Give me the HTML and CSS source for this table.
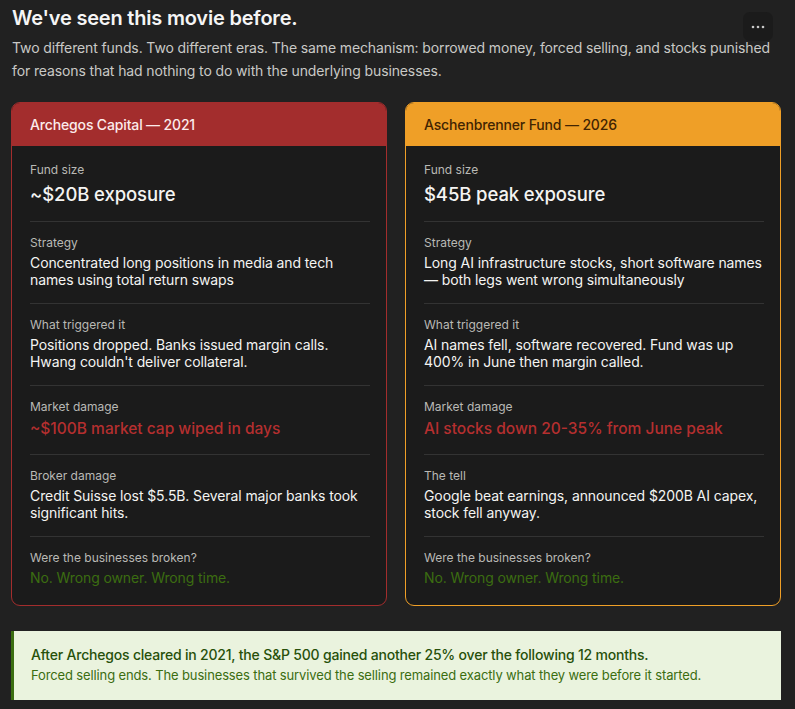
FILE: index.html
```html
<!DOCTYPE html>
<html lang="en">
<head>
<meta charset="utf-8">
<title>We've seen this movie before.</title>
<link rel="stylesheet" href="styles.css">
</head>
<body>
<main class="page">
  <button class="more" aria-label="More options">
    <svg width="14" height="4" viewBox="0 0 14 4"><circle cx="2" cy="2" r="1.3"/><circle cx="7" cy="2" r="1.3"/><circle cx="12" cy="2" r="1.3"/></svg>
  </button>
  <h1 class="title">We've seen this movie before.</h1>
  <p class="lede">Two different funds. Two different eras. The same mechanism: borrowed money, forced selling, and stocks punished for reasons that had nothing to do with the underlying businesses.</p>

  <div class="compare">
    <section class="card card-red">
      <header class="card-head">Archegos Capital — 2021</header>
      <div class="card-body">
        <div class="row">
          <div class="label">Fund size</div>
          <div class="value big">~$20B exposure</div>
        </div>
        <div class="row">
          <div class="label">Strategy</div>
          <div class="value">Concentrated long positions in media and tech names using total return swaps</div>
        </div>
        <div class="row">
          <div class="label">What triggered it</div>
          <div class="value">Positions dropped. Banks issued margin calls. Hwang couldn't deliver collateral.</div>
        </div>
        <div class="row">
          <div class="label">Market damage</div>
          <div class="value danger">~$100B market cap wiped in days</div>
        </div>
        <div class="row">
          <div class="label">Broker damage</div>
          <div class="value">Credit Suisse lost $5.5B. Several major banks took significant hits.</div>
        </div>
        <div class="row">
          <div class="label">Were the businesses broken?</div>
          <div class="value ok">No. Wrong owner. Wrong time.</div>
        </div>
      </div>
    </section>

    <section class="card card-amber">
      <header class="card-head">Aschenbrenner Fund — 2026</header>
      <div class="card-body">
        <div class="row">
          <div class="label">Fund size</div>
          <div class="value big">$45B peak exposure</div>
        </div>
        <div class="row">
          <div class="label">Strategy</div>
          <div class="value">Long AI infrastructure stocks, short software names — both legs went wrong simultaneously</div>
        </div>
        <div class="row">
          <div class="label">What triggered it</div>
          <div class="value">AI names fell, software recovered. Fund was up 400% in June then margin called.</div>
        </div>
        <div class="row">
          <div class="label">Market damage</div>
          <div class="value danger">AI stocks down 20-35% from June peak</div>
        </div>
        <div class="row">
          <div class="label">The tell</div>
          <div class="value">Google beat earnings, announced $200B AI capex, stock fell anyway.</div>
        </div>
        <div class="row">
          <div class="label">Were the businesses broken?</div>
          <div class="value ok">No. Wrong owner. Wrong time.</div>
        </div>
      </div>
    </section>
  </div>

  <aside class="callout">
    <p class="callout-main">After Archegos cleared in 2021, the S&amp;P 500 gained another 25% over the following 12 months.</p>
    <p class="callout-sub">Forced selling ends. The businesses that survived the selling remained exactly what they were before it started.</p>
  </aside>
</main>
</body>
</html>
```

FILE: styles.css
```css
* { box-sizing: border-box; }

html, body {
  margin: 0;
  padding: 0;
  background: #212121;
}

body {
  font-family: Inter, "Noto Sans", "Liberation Sans", sans-serif;
  color: #f2f2f0;
}

.page {
  position: relative;
  width: 795px;
  min-height: 709px;
  padding: 6px 14px 0 11px;
}

.more {
  position: absolute;
  top: 12px;
  left: 743px;
  width: 30px;
  height: 29px;
  border: 0;
  border-radius: 7px;
  background: #1b1b1b;
  display: flex;
  align-items: center;
  justify-content: center;
  padding: 0;
}
.more svg { fill: #c8c8c8; }

.title {
  margin: 0 0 6px 1px;
  font-size: 20px;
  line-height: 24px;
  font-weight: 600;
  color: #f5f5f5;
  letter-spacing: -0.2px;
}

.lede {
  margin: 0 0 19px 1px;
  font-size: 14px;
  line-height: 23.3px;
  letter-spacing: -0.12px;
  color: #c9c9c6;
}

.compare {
  display: grid;
  grid-template-columns: 376px 376px;
  column-gap: 18px;
}

.card {
  border: 1px solid;
  border-radius: 9px;
  overflow: hidden;
  background: #1b1b1b;
  display: flex;
  flex-direction: column;
}
.card-red { border-color: #a32d2d; }
.card-amber { border-color: #ef9f27; }

.card-head {
  padding: 12px 18px 11px 18px;
  font-size: 14px;
  line-height: 20px;
  font-weight: 500;
  letter-spacing: -0.15px;
}
.card-red .card-head { background: #a32d2d; color: #fcebeb; }
.card-amber .card-head { background: #ef9f27; color: #412402; }

.card-body {
  padding: 3px 16px 5px 18px;
  flex: 1;
}

.row {
  padding: 12px 0 14px;
  border-bottom: 1px solid #333333;
}
.row:last-child { border-bottom: 0; }

.label {
  font-size: 12px;
  line-height: 18px;
  color: #b9b9b5;
  margin-bottom: 2px;
}

.value {
  font-size: 14px;
  line-height: 17.5px;
  letter-spacing: -0.1px;
  color: #f4f4f2;
}
.value.big {
  font-size: 18.5px;
  line-height: 26px;
  font-weight: 500;
  letter-spacing: -0.1px;
}
.value.danger {
  font-size: 15.5px;
  line-height: 22px;
  font-weight: 500;
  letter-spacing: 0;
  color: #b52f2f;
}
.value.ok {
  font-weight: 400;
  color: #3b6d11;
}

.callout {
  margin-top: 25px;
  background: #eaf3de;
  border-left: 3px solid #3b6d11;
  padding: 13px 18px 15px 17px;
}
.callout p { margin: 0; }
.callout-main {
  font-size: 14px;
  line-height: 21px;
  font-weight: 500;
  letter-spacing: -0.2px;
  color: #27500a;
}
.callout-sub {
  font-size: 13px;
  line-height: 20px;
  letter-spacing: -0.13px;
  color: #3b6d11;
}
```
